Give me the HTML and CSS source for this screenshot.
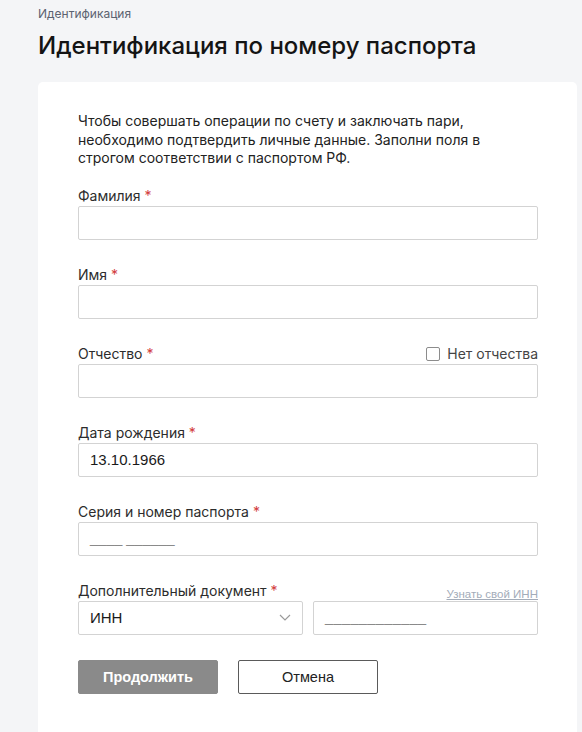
FILE: index.html
```html
<!DOCTYPE html>
<html lang="ru">
<head>
<meta charset="utf-8">
<title>Идентификация по номеру паспорта</title>
<link rel="stylesheet" href="styles.css">
</head>
<body>
<div class="page">
  <div class="crumbs">Идентификация</div>
  <h1 class="title">Идентификация по номеру паспорта</h1>
  <div class="card">
    <p class="intro">Чтобы совершать операции по счету и заключать пари, необходимо подтвердить личные данные. Заполни поля в строгом соответствии с паспортом РФ.</p>

    <div class="field">
      <div class="label-row"><span class="label">Фамилия <span class="req">*</span></span></div>
      <div class="input"></div>
    </div>

    <div class="field">
      <div class="label-row"><span class="label">Имя <span class="req">*</span></span></div>
      <div class="input"></div>
    </div>

    <div class="field">
      <div class="label-row">
        <span class="label">Отчество <span class="req">*</span></span>
        <span class="check"><span class="box"></span>Нет отчества</span>
      </div>
      <div class="input"></div>
    </div>

    <div class="field">
      <div class="label-row"><span class="label">Дата рождения <span class="req">*</span></span></div>
      <div class="input"><span class="value">13.10.1966</span></div>
    </div>

    <div class="field">
      <div class="label-row"><span class="label">Серия и номер паспорта <span class="req">*</span></span></div>
      <div class="input"><span class="mask">____ ______</span></div>
    </div>

    <div class="field field-last">
      <div class="label-row">
        <span class="label">Дополнительный документ <span class="req">*</span></span>
        <a class="link" href="#">Узнать свой ИНН</a>
      </div>
      <div class="pair">
        <div class="input select">
          <span class="value">ИНН</span>
          <svg class="chev" width="12" height="7" viewBox="0 0 12 7"><path d="M1 1l5 5 5-5" fill="none" stroke="#9a9a9a" stroke-width="1.2"/></svg>
        </div>
        <div class="input"><span class="mask mask-inn">____________</span></div>
      </div>
    </div>

    <div class="actions">
      <button class="btn btn-primary">Продолжить</button>
      <button class="btn btn-secondary">Отмена</button>
    </div>
  </div>
</div>
</body>
</html>
```

FILE: styles.css
```css
html, body {
  margin: 0;
  padding: 0;
  background: #f4f5f7;
  font-family: Inter, "Noto Sans", sans-serif;
  color: #222;
}
.page {
  padding: 6px 5px 0 38px;
}
.crumbs {
  font-size: 12px;
  line-height: 16px;
  color: #5b6270;
}
.title {
  margin: 9px 0 0;
  font-size: 24px;
  line-height: 30px;
  font-weight: 500;
  color: #141414;
}
.card {
  margin-top: 21px;
  background: #fff;
  border-radius: 5px 5px 0 0;
  padding: 30px 39px 38px 40px;
}
.intro {
  margin: 0 0 19px;
  font-size: 14px;
  line-height: 18.5px;
  color: #222;
}
.field {
  margin-bottom: 26px;
}
.field-last {
  margin-bottom: 25px;
}
.label-row {
  display: flex;
  justify-content: space-between;
  align-items: center;
  height: 18px;
  margin-bottom: 1px;
}
.label {
  font-size: 14px;
  color: #2c2c2c;
}
.req {
  color: #d23c3c;
}
.check {
  display: flex;
  align-items: center;
  gap: 7px;
  font-size: 14px;
  color: #444;
}
.box {
  width: 12px;
  height: 12px;
  border: 1px solid #8c8c8c;
  border-radius: 2px;
  background: #fff;
}
.link {
  font-family: "Liberation Sans", Arial, sans-serif;
  font-size: 11.5px;
  color: #a3acb9;
  text-decoration: underline;
  align-self: flex-end;
}
.input {
  box-sizing: border-box;
  height: 34px;
  border: 1px solid #d3d3d3;
  border-radius: 2px;
  background: #fff;
  display: flex;
  align-items: center;
  padding: 0 11px;
  font-family: "Liberation Sans", Arial, sans-serif;
  font-size: 15px;
  color: #1a1a1a;
}
.mask {
  color: #8a8a8a;
  font-size: 14.5px;
  position: relative;
  top: -1px;
}
.mask-inn {
  letter-spacing: 0.4px;
}
.pair {
  display: grid;
  grid-template-columns: 1fr 1fr;
  gap: 10px;
}
.select {
  justify-content: space-between;
  padding-right: 11px;
}
.chev {
  display: block;
}
.actions {
  display: flex;
  gap: 20px;
}
.btn {
  box-sizing: border-box;
  width: 140px;
  height: 34px;
  border-radius: 2px;
  font-family: "Liberation Sans", Arial, sans-serif;
  font-size: 14.5px;
  cursor: pointer;
}
.btn-primary {
  background: #8a8a8a;
  border: 1px solid #8a8a8a;
  color: #fff;
  font-weight: bold;
}
.btn-secondary {
  background: #fff;
  border: 1px solid #5a5a5a;
  color: #222;
}
```
